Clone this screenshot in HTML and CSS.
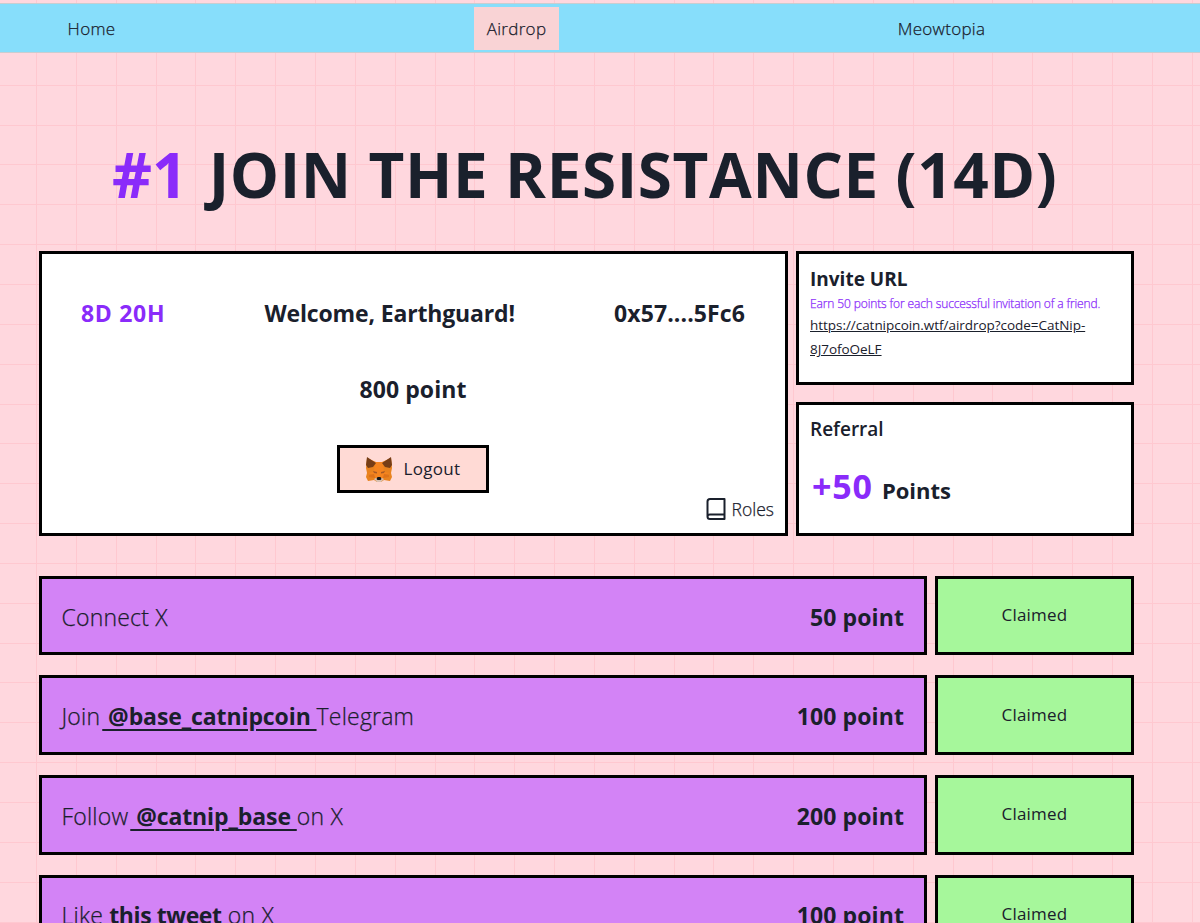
FILE: index.html
```html
<!DOCTYPE html>
<html lang="en">
<head>
  <meta charset="UTF-8">
  <meta name="viewport" content="width=device-width, initial-scale=1.0">
  <title>Catnip Airdrop</title>
  <link rel="stylesheet" href="styles.css">
</head>
<body>
  <nav class="navbar">
    <a class="nav-link" href="#">Home</a>
    <a class="nav-link active" href="#">Airdrop</a>
    <a class="nav-link" href="#">Meowtopia</a>
  </nav>

  <main class="container">
    <h1 class="title"><span class="title-number">#1</span> <span class="title-text">JOIN THE RESISTANCE (14D)</span></h1>

    <section class="dashboard">
      <div class="card profile">
        <div class="profile-top">
          <span class="time-left">8D 20H</span>
          <span class="welcome">Welcome, Earthguard!</span>
          <span class="wallet">0x57....5Fc6</span>
        </div>
        <div class="balance">800 point</div>
        <button class="logout-btn" type="button">
          <svg class="fox" viewBox="0 0 26 25">
            <path fill="#e8821e" d="M1 1l9 4h6l9-4 1 10-1 5 1 4-2 4-6-1-3 2h-4l-3-2-6 1-2-4 1-4-1-5z"/>
            <path fill="#f5841f" d="M9 5h8l1 10 6 1-6 2-2 4h-6l-2-4-6-2 6-1z"/>
            <path fill="#763d16" d="M1 0l9 6-3 4-5 1-2-3zM25 0l-9 6 3 4 5 1 2-3z"/>
            <path fill="#de7219" d="M3 18l5-1 1 4-6-1zM23 18l-5-1-1 4 6-1z"/>
            <path fill="#a85a24" d="M7 14l4 1v1.500l-3-.5zM19 14l-4 1v1.500l3-.5z"/>
            <path fill="#d7c1b3" d="M8 22l2-1h6l2 1-3 3h-4z"/>
            <path fill="#161616" d="M11.500 20h3l1 2-1 1h-3l-1-1z"/>
          </svg>
          <span>Logout</span>
        </button>
        <a class="roles" href="#">
          <svg class="book" viewBox="0 0 20 24" fill="none" stroke="#1a202c" stroke-width="2">
            <path d="M18.500 17.500V2H4Q1.500 2 1.500 4.500V19.500Q1.500 22 4 22H18.500V17.500H4Q1.500 17.500 1.500 19.750" stroke-linejoin="round"/>
          </svg>
          <span>Roles</span>
        </a>
      </div>

      <div class="side">
        <div class="card invite">
          <h2 class="card-title">Invite URL</h2>
          <p class="invite-note">Earn 50 points for each successful invitation of a friend.</p>
          <a class="invite-link" href="#">https://catnipcoin.wtf/airdrop?code=CatNip-<br>8J7ofoOeLF</a>
        </div>
        <div class="card referral">
          <h2 class="card-title">Referral</h2>
          <p class="referral-points"><span class="plus">+50</span> <span class="unit">Points</span></p>
        </div>
      </div>
    </section>

    <section class="tasks">
      <div class="task">
        <div class="task-body"><span>Connect X</span><b class="points">50 point</b></div>
        <button class="claim" type="button">Claimed</button>
      </div>
      <div class="task">
        <div class="task-body"><span>Join<a class="handle" href="#"> @base_catnipcoin </a>Telegram</span><b class="points">100 point</b></div>
        <button class="claim" type="button">Claimed</button>
      </div>
      <div class="task">
        <div class="task-body"><span>Follow<a class="handle" href="#"> @catnip_base </a>on X</span><b class="points">200 point</b></div>
        <button class="claim" type="button">Claimed</button>
      </div>
      <div class="task">
        <div class="task-body"><span>Like <a class="tweet" href="#">this tweet</a> on X</span><b class="points">100 point</b></div>
        <button class="claim" type="button">Claimed</button>
      </div>
    </section>
  </main>
</body>
</html>
```
FILE: styles.css
```css
* {
  box-sizing: border-box;
}

body {
  margin: 0;
  padding-top: 3px;
  height: 923px;
  overflow: hidden;
  color: #1a202c;
  font-family: 'Open Sans', 'Noto Sans', sans-serif;
  background-color: #ffd7de;
  background-image:
    repeating-linear-gradient(to right, transparent 0 36px, #ffc8d0 36px 37px, transparent 37px 39.85px),
    repeating-linear-gradient(to bottom, transparent 0 5px, #ffc8d0 5px 6px, transparent 6px 39.85px);
}

a {
  color: inherit;
}

h1, h2, p {
  margin: 0;
}

button {
  font-family: inherit;
  color: inherit;
}

.navbar {
  display: grid;
  grid-template-columns: repeat(3, 85px);
  justify-content: space-between;
  justify-items: center;
  align-items: center;
  height: 50px;
  padding: 0 216px 0 49px;
  background-color: #87defb;
  border-top: 1px solid #c9cdd0;
  border-bottom: 1px solid #c9cdd0;
}

.nav-link {
  padding: 0 12px;
  font-size: 17px;
  font-weight: 300;
  letter-spacing: 0.3px;
  line-height: 43px;
  text-decoration: none;
}

.nav-link.active {
  width: 85px;
  padding: 0;
  text-align: center;
  background-color: #f9d3d5;
}

/* slightly heavier than the plain light weight */
.nav-link,
.roles,
.invite-note,
.task-body {
  -webkit-text-stroke: 0.25px;
}

.container {
  width: 1095px;
  margin-left: 39px;
}

.title {
  height: 198px;
  padding: 69px 0 0 73px;
  font-size: 62px;
  font-weight: 700;
  line-height: 104px;
  white-space: nowrap;
}

.title-number,
.time-left,
.plus {
  color: #8a2bfa;
}

.title-text {
  margin-left: 5px;
  letter-spacing: 0.6px;
}

.dashboard {
  display: flex;
  gap: 8px;
  height: 285px;
}

.card {
  background-color: #fff;
  border: 3px solid #000;
}

.profile {
  display: flex;
  flex-direction: column;
  align-items: center;
  width: 749px;
  padding: 39px 10px 10px 39px;
}

.profile-top {
  display: flex;
  justify-content: space-between;
  align-self: stretch;
  margin-right: 30px;
  font-size: 23px;
  font-weight: 700;
  line-height: 40px;
}

.time-left {
  letter-spacing: 0.7px;
}

.welcome {
  letter-spacing: -0.15px;
}

.wallet {
  letter-spacing: 0.1px;
}

.balance {
  margin: 36px 30px 0 0;
  font-size: 23px;
  font-weight: 700;
  letter-spacing: 0.1px;
  line-height: 40px;
}

.logout-btn {
  display: flex;
  align-items: center;
  justify-content: center;
  gap: 12px;
  width: 152px;
  height: 48px;
  margin: 36px 30px 0 0;
  padding: 0;
  font-size: 17px;
  font-weight: 500;
  letter-spacing: 0.3px;
  background-color: #ffdad5;
  border: 3px solid #000;
}

.logout-btn span {
  padding-bottom: 2px;
}

.fox {
  width: 26px;
  height: 25px;
}

.roles {
  display: flex;
  align-items: center;
  gap: 6px;
  align-self: flex-end;
  margin: 4px 1px 0 0;
  font-size: 17.500px;
  font-weight: 300;
  line-height: 24px;
  text-decoration: none;
}

.book {
  width: 20px;
  height: 24px;
}

.side {
  display: flex;
  flex-direction: column;
  gap: 17px;
  width: 338px;
}

.invite,
.referral {
  height: 134px;
  padding: 11px;
}

.card-title {
  font-size: 19px;
  line-height: 28px;
}

.referral {
  padding-top: 10px;
}

.referral .card-title {
  font-weight: 600;
}

.invite-note {
  font-size: 12px;
  font-weight: 300;
  letter-spacing: -0.12px;
  line-height: 21px;
  color: #8a2bfa;
  white-space: nowrap;
}

.invite-link {
  display: block;
  margin-top: -1px;
  font-size: 13.500px;
  letter-spacing: -0.04px;
  line-height: 24px;
}

.referral-points {
  padding: 20px 0 0 2px;
  font-weight: 700;
  line-height: 46px;
}

.plus {
  margin-right: 5px;
  font-size: 34px;
  letter-spacing: 0.8px;
}

.unit {
  font-size: 22px;
}

.tasks {
  display: flex;
  flex-direction: column;
  gap: 20px;
  margin-top: 39.700px;
}

.task {
  display: flex;
  gap: 8px;
  height: 79.650px;
}

.task-body {
  display: flex;
  align-items: center;
  justify-content: space-between;
  width: 888px;
  padding: 2px 20px 0 19.500px;
  font-size: 23px;
  font-weight: 300;
  letter-spacing: 0.2px;
  background-color: #d383f6;
  border: 3px solid #000;
}

.task-body a {
  font-weight: 700;
  letter-spacing: -0.1px;
  text-underline-offset: 4px;
  -webkit-text-stroke: 0;
}

.task-body .handle {
  margin-left: 2px;
}

.task-body .tweet {
  letter-spacing: -0.4px;
}

.points {
  font-weight: 700;
  letter-spacing: 0.1px;
  -webkit-text-stroke: 0;
}

.claim {
  flex: 1;
  padding: 0 0 2px;
  font-size: 17px;
  font-weight: 500;
  letter-spacing: 0.2px;
  background-color: #a6f79b;
  border: 3px solid #000;
}
```
